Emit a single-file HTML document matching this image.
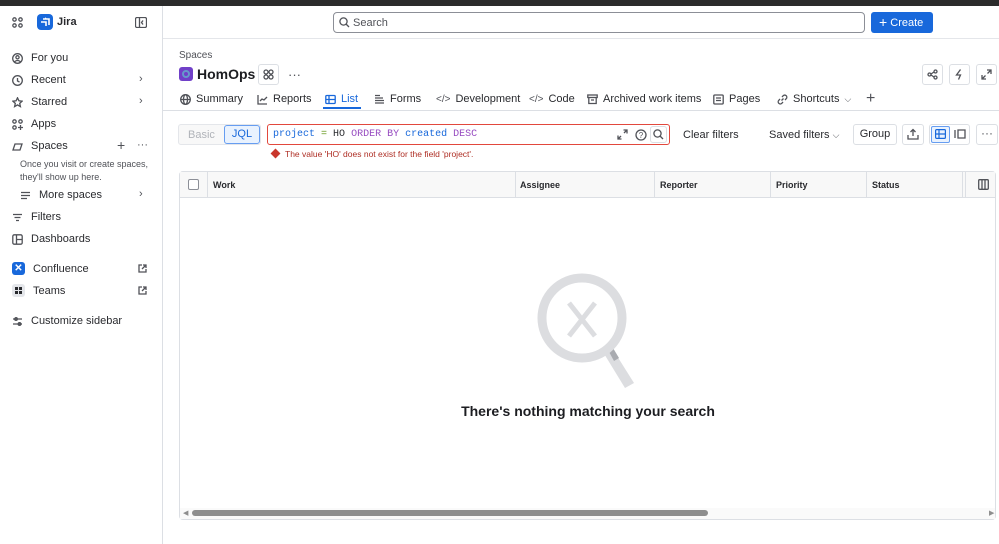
<!DOCTYPE html>
<html><head><meta charset="utf-8"><style>
*{box-sizing:border-box;margin:0;padding:0}
body{width:999px;height:544px;overflow:hidden;background:#fff;font-family:"Liberation Sans",sans-serif;color:#292a2e;font-size:11px;position:relative}
.a{position:absolute}
.ic{stroke:#505258;fill:none;stroke-width:1.3}
.nav{position:absolute;left:12px;display:flex;align-items:center;gap:8px;font-size:11px;color:#292a2e}
.chev{position:absolute;left:139px;color:#505258;font-size:11px}
.tab{position:absolute;top:93px;font-size:11px;color:#292a2e;display:flex;align-items:center;gap:5px}
.btn{position:absolute;border:1px solid #dcdfe4;border-radius:3px;background:#fff}
.th{position:absolute;top:180px;font-size:9px;font-weight:bold;color:#292a2e}
.vl{position:absolute;top:172px;width:1px;height:26px;background:#dcdfe4}
</style></head><body>
<div class="a" style="left:0;top:0;width:999px;height:6px;background:#2b2b2b"></div>
<!-- sidebar -->
<div class="a" style="left:162px;top:6px;width:1px;height:538px;background:#dcdfe4"></div>
<div class="a" style="left:163px;top:38px;width:836px;height:1px;background:#e4e6ea"></div>
<svg class="a" style="left:12px;top:17px" width="11" height="11" viewBox="0 0 11 11"><g class="ic" stroke-width="1.1"><circle cx="2.5" cy="2.5" r="1.7"/><circle cx="8.5" cy="2.5" r="1.7"/><circle cx="2.5" cy="8.5" r="1.7"/><circle cx="8.5" cy="8.5" r="1.7"/></g></svg>
<div class="a" style="left:37px;top:14px;width:16px;height:16px;background:#1868db;border-radius:4px"></div>
<svg class="a" style="left:40px;top:17px" width="10" height="10" viewBox="0 0 10 10"><path d="M3 2h6v6M1 5h5v4M5 1l1 1" stroke="#fff" stroke-width="1.6" fill="none"/></svg>
<div class="a" style="left:57px;top:16px;font-size:11px;font-weight:bold">Jira</div>
<svg class="a" style="left:135px;top:17px" width="12" height="11"><rect x=".5" y=".5" width="11" height="10" rx="1.5" class="ic"/><path d="M4.5 1v9M8 3.5L6.5 5.5 8 7.5" class="ic"/></svg>

<div class="nav" style="top:52px"><svg width="11" height="11"><circle cx="5.5" cy="5.5" r="4.8" class="ic"/><circle cx="5.5" cy="4.3" r="1.6" class="ic"/><path d="M2.5 9c1.5-2 4.5-2 6 0" class="ic"/></svg>For you</div>
<div class="nav" style="top:74px"><svg width="11" height="11"><circle cx="5.5" cy="5.5" r="4.8" class="ic"/><path d="M5.5 3v3l2 1" class="ic"/></svg>Recent</div><div class="chev" style="top:73px">&#x203A;</div>
<div class="nav" style="top:96px"><svg width="11" height="11"><path d="M5.5 .8l1.4 3 3.2.4-2.4 2.2.7 3.2-2.9-1.7-2.9 1.7.7-3.2L.9 4.2l3.2-.4z" class="ic"/></svg>Starred</div><div class="chev" style="top:95px">&#x203A;</div>
<div class="nav" style="top:118px"><svg width="11" height="11"><circle cx="2.5" cy="2.5" r="1.7" class="ic"/><circle cx="8.5" cy="2.5" r="1.7" class="ic"/><circle cx="2.5" cy="8.5" r="1.7" class="ic"/><path d="M8.5 6v5M6 8.5h5" class="ic"/></svg>Apps</div>
<div class="nav" style="top:140px"><svg width="11" height="11"><path d="M1 9l2-6h7l-2 6z" class="ic"/></svg>Spaces</div>
<div class="a" style="left:117px;top:137px;font-size:14px;color:#505258">+</div><div class="a" style="left:137px;top:139px;font-size:11px;color:#505258">···</div>
<div class="a" style="left:20px;top:158px;font-size:9px;color:#505258;line-height:13px">Once you visit or create spaces,<br>they'll show up here.</div>
<div class="nav" style="top:189px;left:20px"><svg width="11" height="11"><path d="M1 2.5h9M1 5.5h9M1 8.5h6" class="ic"/></svg>More spaces</div><div class="chev" style="top:188px">&#x203A;</div>
<div class="nav" style="top:211px"><svg width="11" height="11"><path d="M1 2.5h9M2.5 5.5h6M4 8.5h3" class="ic"/></svg>Filters</div>
<div class="nav" style="top:233px"><svg width="11" height="11"><rect x=".8" y=".8" width="9.4" height="9.4" rx="1.5" class="ic"/><path d="M4.5 1v9M4.5 5.5h5.5" class="ic"/></svg>Dashboards</div>
<div class="nav" style="top:262px"><div style="width:13px;height:13px;background:#1868db;border-radius:3px;color:#fff;font-size:10px;font-weight:bold;text-align:center;line-height:13px">✕</div>Confluence</div>
<div class="nav" style="top:284px"><div style="width:13px;height:13px;background:#e4e6ea;border-radius:3px;position:relative"><i style="position:absolute;left:3px;top:3px;width:3px;height:3px;background:#292a2e"></i><i style="position:absolute;left:7px;top:3px;width:3px;height:3px;background:#292a2e"></i><i style="position:absolute;left:3px;top:7px;width:3px;height:3px;background:#292a2e"></i><i style="position:absolute;left:7px;top:7px;width:3px;height:3px;background:#292a2e"></i></div>Teams</div>
<svg class="a" style="left:138px;top:264px" width="9" height="9"><path d="M4 1H1v7h7V5M5 1h3v3M8 1L4 5" class="ic" stroke-width="1"/></svg>
<svg class="a" style="left:138px;top:286px" width="9" height="9"><path d="M4 1H1v7h7V5M5 1h3v3M8 1L4 5" class="ic" stroke-width="1"/></svg>
<div class="nav" style="top:315px"><svg width="11" height="11"><path d="M1 3h9M1 8h9" class="ic"/><circle cx="4" cy="3" r="1.3" fill="#fff" class="ic"/><circle cx="7.5" cy="8" r="1.3" fill="#fff" class="ic"/></svg>Customize sidebar</div>

<!-- top bar -->
<div class="a" style="left:333px;top:12px;width:532px;height:21px;border:1px solid #8c8f97;border-radius:4px"></div>
<svg class="a" style="left:339px;top:17px" width="11" height="11"><circle cx="4.5" cy="4.5" r="3.6" class="ic"/><path d="M7 7l3 3" class="ic"/></svg>
<div class="a" style="left:353px;top:17px;color:#505258">Search</div>
<div class="a" style="left:871px;top:12px;width:62px;height:21px;background:#1868db;border-radius:3px;color:#fff;font-size:11px;line-height:21px;padding-left:8px"><span style="font-size:14px;vertical-align:-1px">+</span> Create</div>

<!-- header -->
<div class="a" style="left:179px;top:50px;color:#505258;font-size:10px">Spaces</div>
<div class="a" style="left:179px;top:67px;width:14px;height:14px;background:#7040c8;border-radius:3px"></div>
<div class="a" style="left:182px;top:70px;width:8px;height:8px;border:2px solid #69c;border-radius:50%"></div>
<div class="a" style="left:197px;top:66px;font-size:14px;font-weight:bold;color:#1c1d21">HomOps</div>
<div class="btn" style="left:258px;top:64px;width:21px;height:21px"></div>
<svg class="a" style="left:263px;top:69px" width="11" height="11"><circle cx="3" cy="3" r="2" class="ic"/><circle cx="8" cy="3" r="2" class="ic"/><circle cx="3" cy="8" r="2" class="ic"/><circle cx="8" cy="8" r="2" class="ic"/></svg>
<div class="a" style="left:288px;top:67px;font-size:13px;color:#505258">···</div>
<div class="btn" style="left:922px;top:64px;width:21px;height:21px"></div>
<div class="btn" style="left:949px;top:64px;width:21px;height:21px"></div>
<div class="btn" style="left:976px;top:64px;width:21px;height:21px"></div>
<svg class="a" style="left:927px;top:69px" width="11" height="11"><circle cx="2.5" cy="5.5" r="1.5" class="ic"/><circle cx="8.5" cy="2.5" r="1.5" class="ic"/><circle cx="8.5" cy="8.5" r="1.5" class="ic"/><path d="M4 5l3-2M4 6l3 2" class="ic"/></svg>
<svg class="a" style="left:954px;top:69px" width="11" height="11"><path d="M6.5 .5L2.5 6h4l-2 4.5" class="ic"/></svg>
<svg class="a" style="left:981px;top:69px" width="11" height="11"><path d="M6 1h4v4M10 1L6.5 4.5M5 10H1V6M1 10l3.5-3.5" class="ic"/></svg>

<!-- tabs -->
<div class="tab" style="left:180px"><svg width="11" height="11"><circle cx="5.5" cy="5.5" r="4.8" class="ic"/><ellipse cx="5.5" cy="5.5" rx="2" ry="4.8" class="ic"/><path d="M1 5.5h9" class="ic"/></svg>Summary</div>
<div class="tab" style="left:257px"><svg width="11" height="11"><path d="M1 1v9h9M3 7l2-2 2 1 3-3" class="ic"/></svg>Reports</div>
<div class="tab" style="left:325px;color:#1868db"><svg width="11" height="11"><rect x=".8" y="1.5" width="9.4" height="8" rx="1" stroke="#1868db" fill="none" stroke-width="1.3"/><path d="M1 5.5h9M4 2v7" stroke="#1868db" stroke-width="1.3"/></svg>List</div>
<div class="a" style="left:323px;top:107px;width:38px;height:2px;background:#1868db"></div>
<div class="tab" style="left:374px"><svg width="11" height="11"><path d="M1 1.5h5M1 4h8M1 6.5h9M1 9h9" class="ic"/></svg>Forms</div>
<div class="tab" style="left:436px"><span style="color:#505258;font-size:10px">&lt;/&gt;</span>Development</div>
<div class="tab" style="left:529px"><span style="color:#505258;font-size:10px">&lt;/&gt;</span>Code</div>
<div class="tab" style="left:587px"><svg width="11" height="11"><rect x=".8" y="1" width="9.4" height="2.5" class="ic"/><path d="M1.8 3.5v6h7.4v-6M4 6h3" class="ic"/></svg>Archived work items</div>
<div class="tab" style="left:713px"><svg width="11" height="11"><rect x=".8" y="1" width="9.4" height="9" rx="1" class="ic"/><path d="M3 4h5M3 6.5h5" class="ic"/></svg>Pages</div>
<div class="tab" style="left:777px"><svg width="11" height="11"><path d="M4.5 6.5l2-2M3 5L1.8 6.3a2 2 0 003 3L6 8M8 6l1.2-1.3a2 2 0 00-3-3L5 3" class="ic"/></svg>Shortcuts <span style="color:#505258;font-size:9px">&#x2335;</span></div>
<div class="a" style="left:866px;top:90px;font-size:16px;color:#505258">+</div>
<div class="a" style="left:163px;top:110px;width:836px;height:1px;background:#dcdfe4"></div>

<!-- JQL row -->
<div class="a" style="left:178px;top:124px;width:83px;height:21px;border:1px solid #e4e6ea;border-radius:3px;background:#f8f8f8"></div>
<div class="a" style="left:188px;top:129px;color:#b0b3b9">Basic</div>
<div class="a" style="left:224px;top:125px;width:36px;height:19px;border:1px solid #669df1;background:#e9f2fe;border-radius:3px;color:#1868db;text-align:center;line-height:17px">JQL</div>
<div class="a" style="left:267px;top:124px;width:403px;height:21px;border:1.5px solid #e2483d;border-radius:3px"></div>
<div class="a" style="left:273px;top:129px;font-family:'Liberation Mono',monospace;font-size:10px;color:#292a2e"><span style="color:#1868db">project</span> <span style="color:#6a9a23">=</span> HO <span style="color:#964ac0">ORDER BY</span> <span style="color:#1868db">created</span> <span style="color:#964ac0">DESC</span></div>
<svg class="a" style="left:617px;top:129px" width="11" height="11"><path d="M6.5 1h3.5v3.5M10 1L7 4M4.5 10H1V6.5M1 10l3-3" class="ic"/></svg>
<svg class="a" style="left:635px;top:129px" width="12" height="12"><circle cx="6" cy="6" r="5" class="ic"/><text x="6" y="9" font-size="8" text-anchor="middle" fill="#505258" font-family="Liberation Sans">?</text></svg>
<div class="a" style="left:650px;top:126px;width:17px;height:17px;border:1px solid #dcdfe4;border-radius:3px"></div>
<svg class="a" style="left:653px;top:129px" width="11" height="11"><circle cx="4.5" cy="4.5" r="3.6" class="ic"/><path d="M7 7l3 3" class="ic"/></svg>
<div class="a" style="left:272px;top:150px;width:7px;height:7px;background:#c9372c;transform:rotate(45deg)"></div>
<div class="a" style="left:285px;top:149px;font-size:8.5px;color:#ae2e24">The value 'HO' does not exist for the field 'project'.</div>
<div class="a" style="left:683px;top:129px">Clear filters</div>
<div class="a" style="left:769px;top:129px">Saved filters <span style="font-size:9px;color:#505258">&#x2335;</span></div>
<div class="btn" style="left:853px;top:124px;width:44px;height:21px;text-align:center;line-height:19px">Group</div>
<div class="btn" style="left:902px;top:124px;width:22px;height:21px"></div>
<svg class="a" style="left:907px;top:128px" width="12" height="12"><path d="M6 8V1.5M3.5 4L6 1.5 8.5 4M1 7v4h10V7" class="ic"/></svg>
<div class="btn" style="left:929px;top:124px;width:41px;height:21px"></div>
<div class="a" style="left:931px;top:126px;width:19px;height:17px;background:#e9f2fe;border:1px solid #669df1;border-radius:2px"></div>
<svg class="a" style="left:935px;top:129px" width="11" height="10"><rect x=".6" y=".6" width="9.8" height="8.8" rx="1" stroke="#1868db" fill="none" stroke-width="1.2"/><path d="M1 5h9M4 1v8" stroke="#1868db" stroke-width="1.2"/></svg>
<svg class="a" style="left:954px;top:129px" width="12" height="10"><path d="M1 1v8M4 1v8h7V1z" class="ic"/></svg>
<div class="btn" style="left:976px;top:124px;width:22px;height:21px;text-align:center;line-height:17px;color:#505258;font-size:12px">···</div>

<!-- table -->
<div class="a" style="left:179px;top:171px;width:817px;height:349px;border:1px solid #dcdfe4;border-radius:4px"></div>
<div class="a" style="left:180px;top:172px;width:815px;height:26px;background:#f8f8f8;border-bottom:1px solid #dcdfe4"></div>
<div class="a" style="left:188px;top:179px;width:11px;height:11px;border:1px solid #8c8f97;border-radius:2px;background:#fff"></div>
<div class="vl" style="left:207px"></div><div class="vl" style="left:515px"></div><div class="vl" style="left:654px"></div><div class="vl" style="left:770px"></div><div class="vl" style="left:866px"></div><div class="vl" style="left:962px"></div><div class="vl" style="left:965px"></div>
<div class="th" style="left:213px">Work</div>
<div class="th" style="left:520px">Assignee</div>
<div class="th" style="left:660px">Reporter</div>
<div class="th" style="left:776px">Priority</div>
<div class="th" style="left:872px">Status</div>
<svg class="a" style="left:978px;top:179px" width="11" height="11"><rect x=".7" y=".7" width="9.6" height="9.6" rx="1" class="ic"/><path d="M4 1v9M7 1v9" class="ic"/></svg>

<svg class="a" style="left:530px;top:270px" width="120" height="130" viewBox="0 0 120 130">
<path d="M71 86L100 112" stroke="#dcdde0" stroke-width="0"/>
<path d="M73 82l9-4 22 35-9 5z" fill="#dcdde0"/>
<path d="M78 80l5-2 6 10-5 3z" fill="#a9abb0"/>
<circle cx="52" cy="48" r="40" fill="none" stroke="#dcdde0" stroke-width="9"/>
<path d="M39 33l26 33M65 33L39 66" stroke="#dcdde0" stroke-width="5"/>
</svg>
<div class="a" style="left:380px;top:403px;width:416px;text-align:center;font-size:14px;font-weight:bold;color:#1c1d21">There's nothing matching your search</div>

<div class="a" style="left:180px;top:508px;width:815px;height:11px;background:#fafafa"></div>
<div class="a" style="left:192px;top:510px;width:516px;height:6px;background:#8e8e8e;border-radius:3px"></div>
<div class="a" style="left:183px;top:509px;font-size:7px;color:#8e8e8e">◀</div>
<div class="a" style="left:989px;top:509px;font-size:7px;color:#8e8e8e">▶</div>
</body></html>
